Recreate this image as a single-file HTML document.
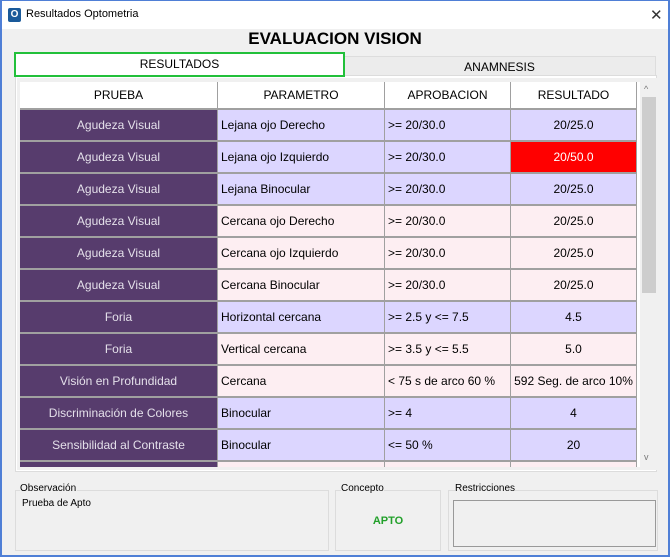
<!DOCTYPE html>
<html><head><meta charset="utf-8"><style>
*{margin:0;padding:0;box-sizing:border-box}
body{width:670px;height:557px;overflow:hidden;font-family:"Liberation Sans",Arial,sans-serif;font-size:12px;color:#000;background:#f0f0f0;position:relative}
.a{position:absolute}
.c{position:absolute;height:30px;line-height:30px;white-space:nowrap;overflow:hidden}
.p{background:#573c6d;color:#e4e0ea;text-align:center}
.L{background:#dcd6ff}.P{background:#fdeef2}
.l{padding-left:3px}.m{text-align:center}
.h{background:#fff;height:26px;line-height:26px;text-align:center;top:82px}
</style></head><body>
<div class="a" style="left:0;top:0;width:670px;height:557px;border:2px solid #4f7fd6;border-top:1px solid #4f7fd6"></div>
<div class="a" style="left:2px;top:1px;width:666px;height:28px;background:#fff"></div>
<div class="a" style="left:8px;top:8px;width:13px;height:14px;background:#1a5a9a;border-radius:2px;color:#fff;font-size:10px;font-weight:bold;line-height:14px;text-align:center">O</div>
<div class="a" style="left:26px;top:8px;font-size:11px">Resultados Optometria</div>
<div class="a" style="left:650px;top:6px;font-size:15px;color:#333">✕</div>
<div class="a" style="left:0;top:29px;width:670px;text-align:center;font-size:17px;font-weight:bold;line-height:20px">EVALUACION VISION</div>
<div class="a" style="left:343px;top:56px;width:313px;height:21px;background:#ececec;border:1px solid #ddd;text-align:center;line-height:20px">ANAMNESIS</div>
<div class="a" style="left:15px;top:75px;width:642px;height:397px;background:#fff;border:1px solid #dcdcdc"></div>
<div class="a" style="left:17px;top:78px;width:640px;height:392px;background:#f0f0f0"></div>
<div class="a" style="left:14px;top:52px;width:331px;height:25px;background:#fff;border:2px solid #22c03a;text-align:center;line-height:21px">RESULTADOS</div>
<div class="a" style="left:20px;top:82px;width:621px;height:385px;background:#a0a0a0;overflow:hidden">
</div>
<div class="a" style="left:20px;top:82px;width:621px;height:385px;overflow:hidden">
<div style="position:relative;left:-20px;top:-82px">
<div class="c h" style="left:20px;width:197px">PRUEBA</div>
<div class="c h" style="left:218px;width:166px">PARAMETRO</div>
<div class="c h" style="left:385px;width:125px">APROBACION</div>
<div class="c h" style="left:511px;width:125px">RESULTADO</div>

<div class="c p" style="left:20px;width:197px;top:110px">Agudeza Visual</div><div class="c L l" style="left:218px;width:166px;top:110px">Lejana ojo Derecho</div><div class="c L l" style="left:385px;width:125px;top:110px">&gt;= 20/30.0</div><div class="c L m" style="left:511px;width:125px;top:110px">20/25.0</div>
<div class="c p" style="left:20px;width:197px;top:142px">Agudeza Visual</div><div class="c L l" style="left:218px;width:166px;top:142px">Lejana ojo Izquierdo</div><div class="c L l" style="left:385px;width:125px;top:142px">&gt;= 20/30.0</div><div class="c m" style="left:511px;width:125px;top:142px;background:#f00;color:#fff">20/50.0</div>
<div class="c p" style="left:20px;width:197px;top:174px">Agudeza Visual</div><div class="c L l" style="left:218px;width:166px;top:174px">Lejana Binocular</div><div class="c L l" style="left:385px;width:125px;top:174px">&gt;= 20/30.0</div><div class="c L m" style="left:511px;width:125px;top:174px">20/25.0</div>
<div class="c p" style="left:20px;width:197px;top:206px">Agudeza Visual</div><div class="c P l" style="left:218px;width:166px;top:206px">Cercana ojo Derecho</div><div class="c P l" style="left:385px;width:125px;top:206px">&gt;= 20/30.0</div><div class="c P m" style="left:511px;width:125px;top:206px">20/25.0</div>
<div class="c p" style="left:20px;width:197px;top:238px">Agudeza Visual</div><div class="c P l" style="left:218px;width:166px;top:238px">Cercana ojo Izquierdo</div><div class="c P l" style="left:385px;width:125px;top:238px">&gt;= 20/30.0</div><div class="c P m" style="left:511px;width:125px;top:238px">20/25.0</div>
<div class="c p" style="left:20px;width:197px;top:270px">Agudeza Visual</div><div class="c P l" style="left:218px;width:166px;top:270px">Cercana Binocular</div><div class="c P l" style="left:385px;width:125px;top:270px">&gt;= 20/30.0</div><div class="c P m" style="left:511px;width:125px;top:270px">20/25.0</div>
<div class="c p" style="left:20px;width:197px;top:302px">Foria</div><div class="c L l" style="left:218px;width:166px;top:302px">Horizontal cercana</div><div class="c L l" style="left:385px;width:125px;top:302px">&gt;= 2.5 y &lt;= 7.5</div><div class="c L m" style="left:511px;width:125px;top:302px">4.5</div>
<div class="c p" style="left:20px;width:197px;top:334px">Foria</div><div class="c P l" style="left:218px;width:166px;top:334px">Vertical cercana</div><div class="c P l" style="left:385px;width:125px;top:334px">&gt;= 3.5 y &lt;= 5.5</div><div class="c P m" style="left:511px;width:125px;top:334px">5.0</div>
<div class="c p" style="left:20px;width:197px;top:366px">Visión en Profundidad</div><div class="c P l" style="left:218px;width:166px;top:366px">Cercana</div><div class="c P l" style="left:385px;width:125px;top:366px">&lt; 75 s de arco 60 %</div><div class="c P m" style="left:511px;width:125px;top:366px">592 Seg. de arco 10%</div>
<div class="c p" style="left:20px;width:197px;top:398px">Discriminación de Colores</div><div class="c L l" style="left:218px;width:166px;top:398px">Binocular</div><div class="c L l" style="left:385px;width:125px;top:398px">&gt;= 4</div><div class="c L m" style="left:511px;width:125px;top:398px">4</div>
<div class="c p" style="left:20px;width:197px;top:430px">Sensibilidad al Contraste</div><div class="c L l" style="left:218px;width:166px;top:430px">Binocular</div><div class="c L l" style="left:385px;width:125px;top:430px">&lt;= 50 %</div><div class="c L m" style="left:511px;width:125px;top:430px">20</div>
<div class="c p" style="left:20px;width:197px;top:462px"></div><div class="c P" style="left:218px;width:166px;top:462px"></div><div class="c P" style="left:385px;width:125px;top:462px"></div><div class="c P" style="left:511px;width:125px;top:462px"></div>
<div class="a" style="left:637px;top:82px;width:4px;height:385px;background:#fff"></div>
</div></div>
<div class="a" style="left:640px;top:82px;width:17px;height:385px;background:#f0f0f0"></div>
<div class="a" style="left:642px;top:97px;width:14px;height:196px;background:#cdcdcd"></div>
<div class="a" style="left:644px;top:84px;font-size:9px;color:#777">^</div>
<div class="a" style="left:644px;top:452px;font-size:9px;color:#777">v</div>

<div class="a" style="left:15px;top:490px;width:314px;height:61px;border:1px solid #dcdcdc"></div>
<div class="a" style="left:20px;top:483px;font-size:10px;background:#f0f0f0;padding-right:1px">Observación</div>
<div class="a" style="left:22px;top:498px;font-size:10px">Prueba de Apto</div>
<div class="a" style="left:335px;top:490px;width:106px;height:61px;border:1px solid #dcdcdc"></div>
<div class="a" style="left:341px;top:483px;font-size:10px;background:#f0f0f0">Concepto</div>
<div class="a" style="left:335px;top:515px;width:106px;text-align:center;font-size:11px;font-weight:bold;color:#22a02a">APTO</div>
<div class="a" style="left:448px;top:490px;width:210px;height:61px;border:1px solid #dcdcdc"></div>
<div class="a" style="left:455px;top:483px;font-size:10px;background:#f0f0f0">Restricciones</div>
<div class="a" style="left:453px;top:500px;width:203px;height:47px;border:1px solid #999;background:#f0f0f0"></div>
</body></html>
